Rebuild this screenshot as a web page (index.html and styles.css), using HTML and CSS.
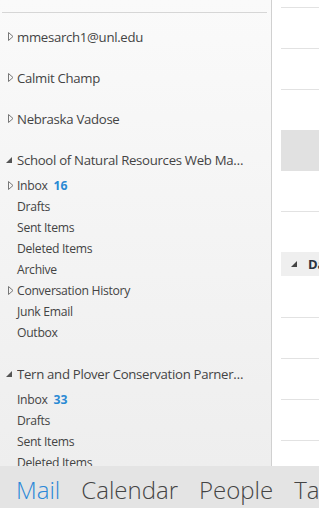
FILE: index.html
```html
<!DOCTYPE html>
<html lang="en">

<head>
    <meta charset="UTF-8">
    <meta name="viewport" content="width=device-width, initial-scale=1.0">
    <title>Mail</title>
    <link rel="stylesheet" href="styles.css">
</head>

<body>
    <div class="app">
        <div class="main">
            <div class="folders">
                <div class="rule"></div>

                <div class="account">
                    <div class="account-name">
                        <svg class="arrow" width="6" height="9" viewBox="0 0 6 9"><polygon points="0.5,0.5 5,4.5 0.5,8.5" /></svg>
                        <span>mmesarch1@unl.edu</span>
                    </div>
                </div>
                <div class="account">
                    <div class="account-name">
                        <svg class="arrow" width="6" height="9" viewBox="0 0 6 9"><polygon points="0.5,0.5 5,4.5 0.5,8.5" /></svg>
                        <span>Calmit Champ</span>
                    </div>
                </div>
                <div class="account">
                    <div class="account-name">
                        <svg class="arrow" width="6" height="9" viewBox="0 0 6 9"><polygon points="0.5,0.5 5,4.5 0.5,8.5" /></svg>
                        <span>Nebraska Vadose</span>
                    </div>
                </div>

                <div class="account">
                    <div class="account-name">
                        <svg class="arrow open" width="6" height="9" viewBox="0 0 6 9"><polygon points="6,2 6,8 0,8" /></svg>
                        <span>School of Natural Resources Web Master</span>
                    </div>
                    <ul class="folder-list">
                        <li><svg class="arrow" width="6" height="9" viewBox="0 0 6 9"><polygon points="0.5,0.5 5,4.5 0.5,8.5" /></svg>Inbox <b class="count">16</b></li>
                        <li>Drafts</li>
                        <li>Sent Items</li>
                        <li>Deleted Items</li>
                        <li>Archive</li>
                        <li><svg class="arrow" width="6" height="9" viewBox="0 0 6 9"><polygon points="0.5,0.5 5,4.5 0.5,8.5" /></svg>Conversation History</li>
                        <li>Junk Email</li>
                        <li>Outbox</li>
                    </ul>
                </div>

                <div class="account">
                    <div class="account-name">
                        <svg class="arrow open" width="6" height="9" viewBox="0 0 6 9"><polygon points="6,2 6,8 0,8" /></svg>
                        <span>Tern and Plover Conservation Parnership</span>
                    </div>
                    <ul class="folder-list">
                        <li>Inbox <b class="count">33</b></li>
                        <li>Drafts</li>
                        <li>Sent Items</li>
                        <li>Deleted Items</li>
                        <li>Archive</li>
                    </ul>
                </div>
            </div>

            <div class="messages">
                <div class="row top"></div>
                <div class="row"></div>
                <div class="row"></div>
                <div class="row plain"></div>
                <div class="row selected"></div>
                <div class="row"></div>
                <div class="row plain"></div>
                <div class="group-header">
                    <svg width="6" height="6" viewBox="0 0 6 6"><polygon points="6,0 6,6 0,6" /></svg>
                    <span>Date</span>
                </div>
                <div class="row tall"></div>
                <div class="row"></div>
                <div class="row"></div>
                <div class="row"></div>
            </div>
        </div>

        <nav class="nav">
            <a href="#" class="active">Mail</a>
            <a href="#">Calendar</a>
            <a href="#">People</a>
            <a href="#">Tasks</a>
        </nav>
    </div>
</body>

</html>
```

FILE: styles.css
```css
body {
    margin: 0;
    font-family: "Open Sans", "Noto Sans", sans-serif;
    color: #444;
    background-color: #fff;
}

.app {
    width: 319px;
    height: 508px;
    display: flex;
    flex-direction: column;
    overflow: hidden;
}

.main {
    height: 466px;
    display: flex;
    overflow: hidden;
}

/* folder pane */

.folders {
    width: 271px;
    flex-shrink: 0;
    background: linear-gradient(#fafafa, #eeeeee);
    border-right: 1px solid #d0d0d0;
    overflow: hidden;
}

.rule {
    margin: 12px 4px 0 2px;
    border-top: 1px solid #d6d6d6;
}

.account {
    margin-top: 20px;
}

.account:nth-child(2) {
    margin-top: 13px;
}

.account-name {
    display: flex;
    align-items: center;
    height: 21px;
    padding-left: 8px;
    font-size: 13.2px;
    letter-spacing: -0.3px;
    white-space: nowrap;
}

.account-name span {
    width: 232px;
    overflow: hidden;
    text-overflow: ellipsis;
}

.arrow {
    width: 6px;
    margin-right: 3px;
    flex-shrink: 0;
}

.arrow polygon {
    fill: none;
    stroke: #777;
    stroke-width: 1;
}

.arrow.open polygon {
    fill: #555;
    stroke: none;
}

.account-name .arrow.open {
    margin-left: -2px;
    margin-right: 5px;
}

.folder-list {
    list-style: none;
    margin: 5px 0 0 0;
    padding: 0 0 0 17px;
}

.folder-list li {
    position: relative;
    height: 21px;
    line-height: 21px;
    font-size: 12.2px;
    letter-spacing: -0.3px;
    white-space: nowrap;
}

.folder-list li .arrow {
    position: absolute;
    left: -9px;
    top: 6px;
}

.count {
    color: #2a8ad4;
    margin-left: 3px;
    letter-spacing: 0;
}

/* message list */

.messages {
    flex: 1;
    padding-left: 9px;
    overflow: hidden;
}

.row {
    height: 40px;
    border-bottom: 1px solid #e2e2e2;
}

.row.top {
    height: 7px;
}

.row.plain {
    border-bottom: none;
}

.row.selected {
    height: 41px;
    background-color: #e1e1e1;
    border-bottom: none;
}

.row.tall {
    height: 41px;
}

.group-header {
    display: flex;
    align-items: center;
    height: 24px;
    background-color: #efefef;
    padding-left: 10px;
    font-size: 13px;
    font-weight: 700;
    color: #2b3440;
    white-space: nowrap;
}

.group-header svg {
    flex-shrink: 0;
    margin-right: 11px;
}

.group-header polygon {
    fill: #444;
}

/* bottom navigation */

.nav {
    flex: 1;
    display: flex;
    align-items: center;
    gap: 21px;
    padding: 4px 0 0 16px;
    background-color: #e4e4e4;
    white-space: nowrap;
}

.nav a {
    font-size: 24px;
    font-weight: 300;
    color: #444;
    text-decoration: none;
}

.nav a.active {
    color: #2b88d8;
}
```
